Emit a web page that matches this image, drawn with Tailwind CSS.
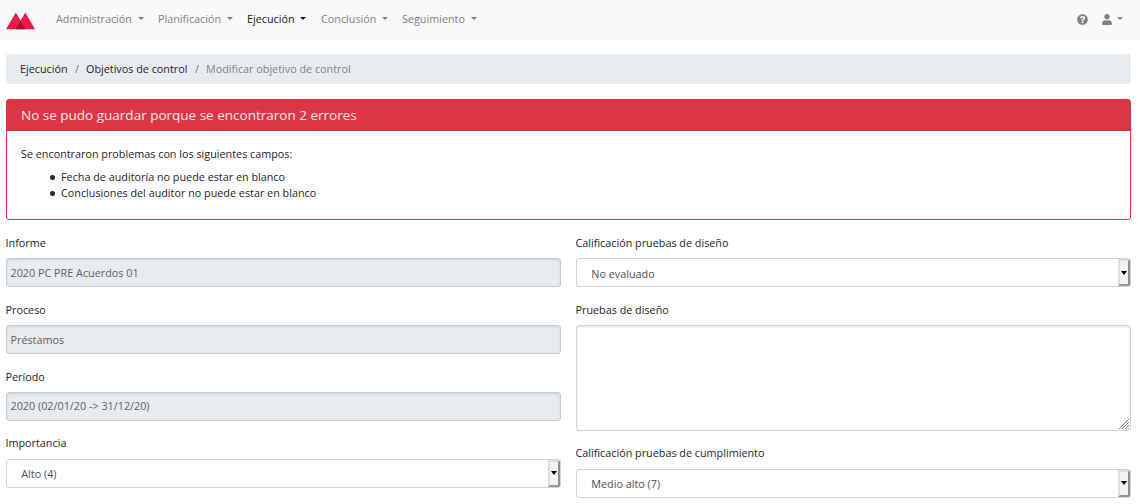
<!DOCTYPE html>
<html lang="es">
<head>
<meta charset="utf-8">
<title>Modificar objetivo de control</title>
<script src="https://cdn.jsdelivr.net/npm/@tailwindcss/browser@4"></script>
</head>
<body class="h-[504px] overflow-hidden bg-white font-['Open_Sans',sans-serif] text-[10.8px] leading-4 text-[#212529]">
<nav class="flex h-[41px] items-center bg-[#f8f9fa] pl-[6px] pr-[17px] pb-[3px] text-[#808182]">
  <svg class="mt-[3px] h-[18px] w-[29px]" viewBox="0 0 29 18"><path fill="#f01944" d="M0 17.2 9.8 .4l4.8 8.2L19.3.4 29 17.2z"/><path fill="#a90d35" d="M9.7 17.2l4.9-8.6 4.9 8.6z"/></svg>
  <ul class="ml-[21px] flex items-center">
    <li class="flex w-[102px] items-center justify-between pr-[14px]"><span>Administración</span><i class="-mt-px border-x-3 border-t-3 border-x-transparent border-t-current"></i></li>
    <li class="flex w-[89px] items-center justify-between pr-[14px]"><span>Planificación</span><i class="-mt-px border-x-3 border-t-3 border-x-transparent border-t-current"></i></li>
    <li class="flex w-[73px] items-center justify-between pr-[14px] text-[#191919]"><span>Ejecución</span><i class="-mt-px border-x-3 border-t-3 border-x-transparent border-t-current"></i></li>
    <li class="flex w-[82px] items-center justify-between pr-[14px] pl-px"><span>Conclusión</span><i class="-mt-px border-x-3 border-t-3 border-x-transparent border-t-current"></i></li>
    <li class="flex w-[75px] items-center justify-between"><span>Seguimiento</span><i class="-mt-px border-x-3 border-t-3 border-x-transparent border-t-current"></i></li>
  </ul>
  <div class="ml-auto flex items-center">
    <svg class="h-[11px] w-[11px]" viewBox="0 0 512 512" fill="currentColor"><path d="M504 256c0 137-111 248-248 248S8 393 8 256C8 119.100 119 8 256 8s248 111.100 248 248zM262.700 90c-54.500 0-89.300 23-116.500 63.800-3.500 5.300-2.400 12.400 2.700 16.300l34.700 26.300c5.200 3.900 12.600 3 16.700-2.100 17.900-22.700 30.100-35.800 57.300-35.800 20.400 0 45.700 13.100 45.700 33 0 15-12.400 22.700-32.500 34C247.100 238.500 216 255 216 296v4c0 6.600 5.400 12 12 12h56c6.600 0 12-5.400 12-12v-1.300c0-28.800 84-30 84-107.800C380 132.200 319.200 90 262.700 90zM256 338c-25.400 0-46 20.600-46 46s20.600 46 46 46 46-20.600 46-46-20.600-46-46-46z"/></svg>
    <svg class="ml-[14px] h-[11px] w-[10px]" viewBox="0 0 448 512" fill="currentColor"><path d="M224 256c70.700 0 128-57.300 128-128S294.700 0 224 0 96 57.300 96 128s57.300 128 128 128zm89.600 32h-16.700c-22.200 10.200-46.900 16-72.900 16s-50.600-5.800-72.900-16h-16.700C60.200 288 0 348.200 0 422.400V464c0 26.500 21.500 48 48 48h352c26.500 0 48-21.500 48-48v-41.600c0-74.200-60.200-134.400-134.400-134.400z"/></svg>
    <i class="-mt-px ml-[5px] border-x-3 border-t-3 border-x-transparent border-t-current"></i>
  </div>
</nav>
<main class="pl-[6px] pr-[9px] pt-[13px]">
  <ol class="flex h-[30px] items-center rounded-[3px] bg-[#e9ecef] px-[14px] text-[#6c757d]">
    <li class="w-[55px] text-[#212529]">Ejecución</li>
    <li class="w-[11px]">/</li>
    <li class="w-[109px] text-[#212529]">Objetivos de control</li>
    <li class="w-[11px]">/</li>
    <li class="text-[#7c838a]">Modificar objetivo de control</li>
  </ol>
  <section class="mt-[15px] h-[121px] rounded-[3px] border border-[#dc3545]">
    <h2 class="flex h-[31px] items-center border-b border-[#c5303e] bg-[#dc3545] px-[14px] text-[13.5px] text-[#f8e9eb]">No se pudo guardar porque se encontraron 2 errores</h2>
    <div class="px-[14px] pt-[15px]">
      <p>Se encontraron problemas con los siguientes campos:</p>
      <ul class="mt-[7px] pl-[29px]">
        <li class="flex items-center gap-[6px]"><i class="h-[5px] w-[5px] rounded-full bg-[#212529]"></i><span>Fecha de auditoría no puede estar en blanco</span></li>
        <li class="flex items-center gap-[6px]"><i class="h-[5px] w-[5px] rounded-full bg-[#212529]"></i><span>Conclusiones del auditor no puede estar en blanco</span></li>
      </ul>
    </div>
  </section>
  <form class="mt-[15px] grid grid-cols-2 gap-[15px]">
    <div>
      <label class="-ml-[0.5px] block">Informe</label>
      <div class="mt-[7px] flex h-[29px] items-center rounded-[3px] border border-[#c8c9ca] bg-[#e9ecef] px-[3.5px] text-[#5d6063] shadow-[inset_0_1px_3px_#0000001c]">2020 PC PRE Acuerdos 01</div>
      <label class="-ml-[0.5px] mt-[15px] block">Proceso</label>
      <div class="mt-[7px] flex h-[29px] items-center rounded-[3px] border border-[#c8c9ca] bg-[#e9ecef] px-[3.5px] text-[#5d6063] shadow-[inset_0_1px_3px_#0000001c]">Préstamos</div>
      <label class="-ml-[0.5px] mt-[15px] block">Período</label>
      <div class="mt-[7px] flex h-[29px] items-center rounded-[3px] border border-[#c8c9ca] bg-[#e9ecef] px-[3.5px] pb-px text-[#5d6063] shadow-[inset_0_1px_3px_#0000001c]">2020 (02/01/20 -&gt; 31/12/20)</div>
      <label class="-ml-[0.5px] mt-[14px] block">Importancia</label>
      <div class="mt-[8px] flex h-[29px] items-center justify-between rounded-[3px] border border-[#ced4da] pl-[14.3px] text-[#495057]"><span class="pt-px">Alto (4)</span><i class="flex h-[27px] w-[12px] items-center justify-center rounded-r-[2px] border-2 border-t-[#dddddf] border-r-[#8f8f8f] border-b-[#979797] border-l-[#dedede] bg-[#f4f3f2]"><b class="-mt-px border-x-3 border-t-4 border-x-transparent border-t-black"></b></i></div>
    </div>
    <div>
      <label class="-ml-[0.5px] block">Calificación pruebas de diseño</label>
      <div class="mt-[7px] flex h-[29px] items-center justify-between rounded-[3px] border border-[#ced4da] pl-[14.3px] text-[#495057]"><span class="pt-[2px]">No evaluado</span><i class="flex h-[27px] w-[12px] items-center justify-center rounded-r-[2px] border-2 border-t-[#dddddf] border-r-[#8f8f8f] border-b-[#979797] border-l-[#dedede] bg-[#f4f3f2]"><b class="border-x-3 border-t-4 border-x-transparent border-t-black"></b></i></div>
      <label class="-ml-[0.5px] mt-[15px] block">Pruebas de diseño</label>
      <div class="mt-[7px] flex h-[106px] items-end justify-end rounded-[3px] border border-[#ced4da] shadow-[inset_0_1px_3px_#0000001c]"><svg class="mr-px mb-px h-[10px] w-[10px]" viewBox="0 0 10 10" fill="none" stroke="#777" stroke-width=".9"><path d="M0 10 10 0M3 10l7-7M6 10l4-4M8.5 10 10 8.5"/></svg></div>
      <label class="-ml-[0.5px] mt-[14px] block">Calificación pruebas de cumplimiento</label>
      <div class="mt-[8px] flex h-[29px] items-center justify-between rounded-[3px] border border-[#ced4da] pl-[14.3px] text-[#495057]"><span class="pt-px">Medio alto (7)</span><i class="flex h-[27px] w-[12px] items-center justify-center rounded-r-[2px] border-2 border-t-[#dddddf] border-r-[#8f8f8f] border-b-[#979797] border-l-[#dedede] bg-[#f4f3f2]"><b class="-mt-px border-x-3 border-t-4 border-x-transparent border-t-black"></b></i></div>
    </div>
  </form>
</main>
</body>
</html>
